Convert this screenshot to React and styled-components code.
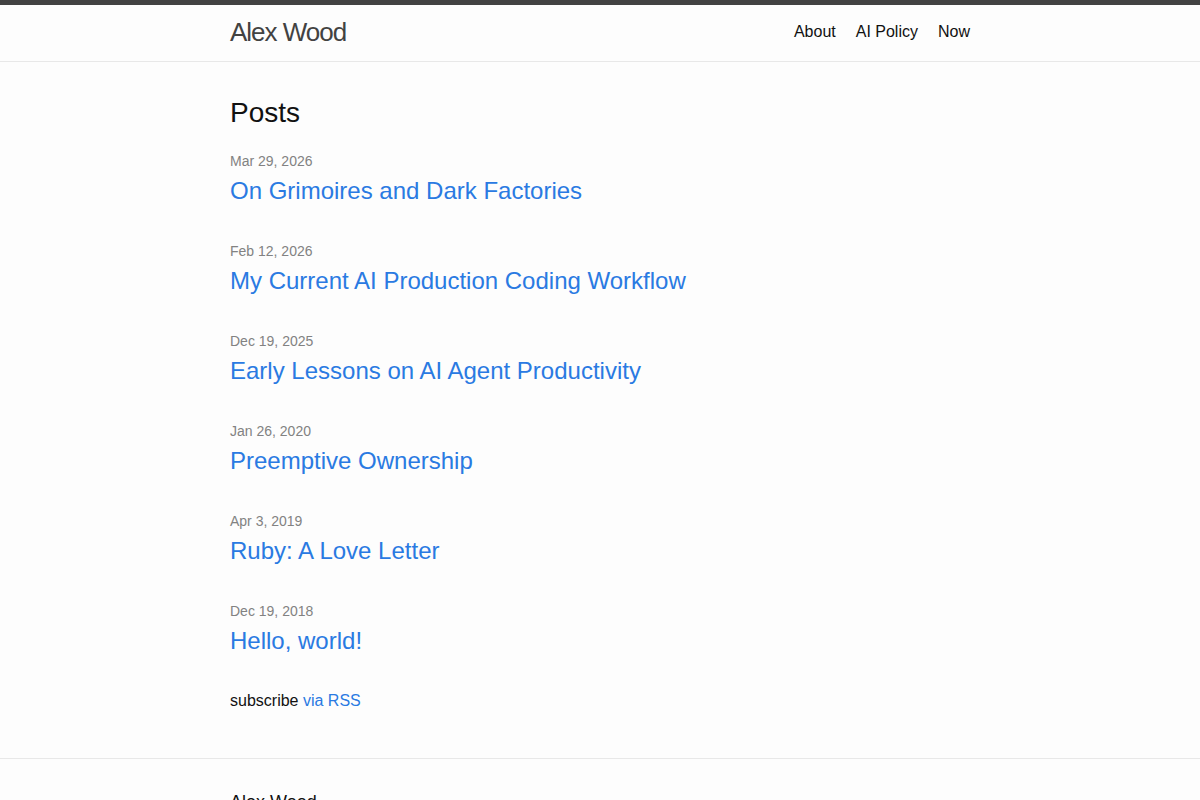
import React from "react";
import styled, { createGlobalStyle } from "styled-components";

const posts = [
  { date: "Mar 29, 2026", title: "On Grimoires and Dark Factories" },
  { date: "Feb 12, 2026", title: "My Current AI Production Coding Workflow" },
  { date: "Dec 19, 2025", title: "Early Lessons on AI Agent Productivity" },
  { date: "Jan 26, 2020", title: "Preemptive Ownership" },
  { date: "Apr 3, 2019", title: "Ruby: A Love Letter" },
  { date: "Dec 19, 2018", title: "Hello, world!" },
];

const navLinks = ["About", "AI Policy", "Now"];

const GlobalStyle = createGlobalStyle`
  * { box-sizing: border-box; }
  body {
    margin: 0;
    background: #fdfdfd;
    color: #111;
    font: 400 16px/1.5 "Liberation Sans", Arial, sans-serif;
  }
  a { text-decoration: none; }
`;

const Header = styled.header`
  border-top: 5px solid #424242;
  border-bottom: 1px solid #e8e8e8;
  min-height: 62px;
`;

const Wrapper = styled.div`
  max-width: 800px;
  margin: 0 auto;
  padding: 0 30px;
`;

const HeaderRow = styled(Wrapper)`
  display: flex;
  justify-content: space-between;
  align-items: center;
`;

const SiteTitle = styled.a`
  font-size: 26px;
  font-weight: 300;
  line-height: 54px;
  letter-spacing: -1px;
  color: #424242;
`;

const Nav = styled.nav`
  display: flex;
  gap: 20px;
  line-height: 54px;
`;

const NavLink = styled.a`
  color: #111;
`;

const Main = styled.main`
  padding: 30px 0;
`;

const Heading = styled.h2`
  font-size: 28px;
  font-weight: 400;
  line-height: 1.5;
  margin: 0 0 15px;
`;

const PostList = styled.ul`
  list-style: none;
  margin: 0;
  padding: 0;
`;

const PostItem = styled.li`
  margin-bottom: 30px;
`;

const Meta = styled.span`
  font-size: 14px;
  color: #828282;
`;

const PostTitle = styled.h3`
  margin: 0;
  font-size: 24px;
  font-weight: 400;
  line-height: 1.5;
`;

const PostLink = styled.a`
  display: block;
  color: #2a7ae2;
`;

const Rss = styled.p`
  margin: 0 0 15px;
`;

const BlueLink = styled.a`
  color: #2a7ae2;
`;

const Footer = styled.footer`
  border-top: 1px solid #e8e8e8;
  padding: 30px 0;
`;

const FooterHeading = styled.h2`
  font-size: 18px;
  font-weight: 400;
  margin: 0 0 15px;
`;

export default function App() {
  return (
    <>
      <GlobalStyle />
      <Header>
        <HeaderRow>
          <SiteTitle href="#">Alex Wood</SiteTitle>
          <Nav>
            {navLinks.map((l) => (
              <NavLink key={l} href="#">
                {l}
              </NavLink>
            ))}
          </Nav>
        </HeaderRow>
      </Header>
      <Main>
        <Wrapper>
          <Heading>Posts</Heading>
          <PostList>
            {posts.map((p) => (
              <PostItem key={p.title}>
                <Meta>{p.date}</Meta>
                <PostTitle>
                  <PostLink href="#">{p.title}</PostLink>
                </PostTitle>
              </PostItem>
            ))}
          </PostList>
          <Rss>
            subscribe <BlueLink href="#">via RSS</BlueLink>
          </Rss>
        </Wrapper>
      </Main>
      <Footer>
        <Wrapper>
          <FooterHeading>Alex Wood</FooterHeading>
        </Wrapper>
      </Footer>
    </>
  );
}
